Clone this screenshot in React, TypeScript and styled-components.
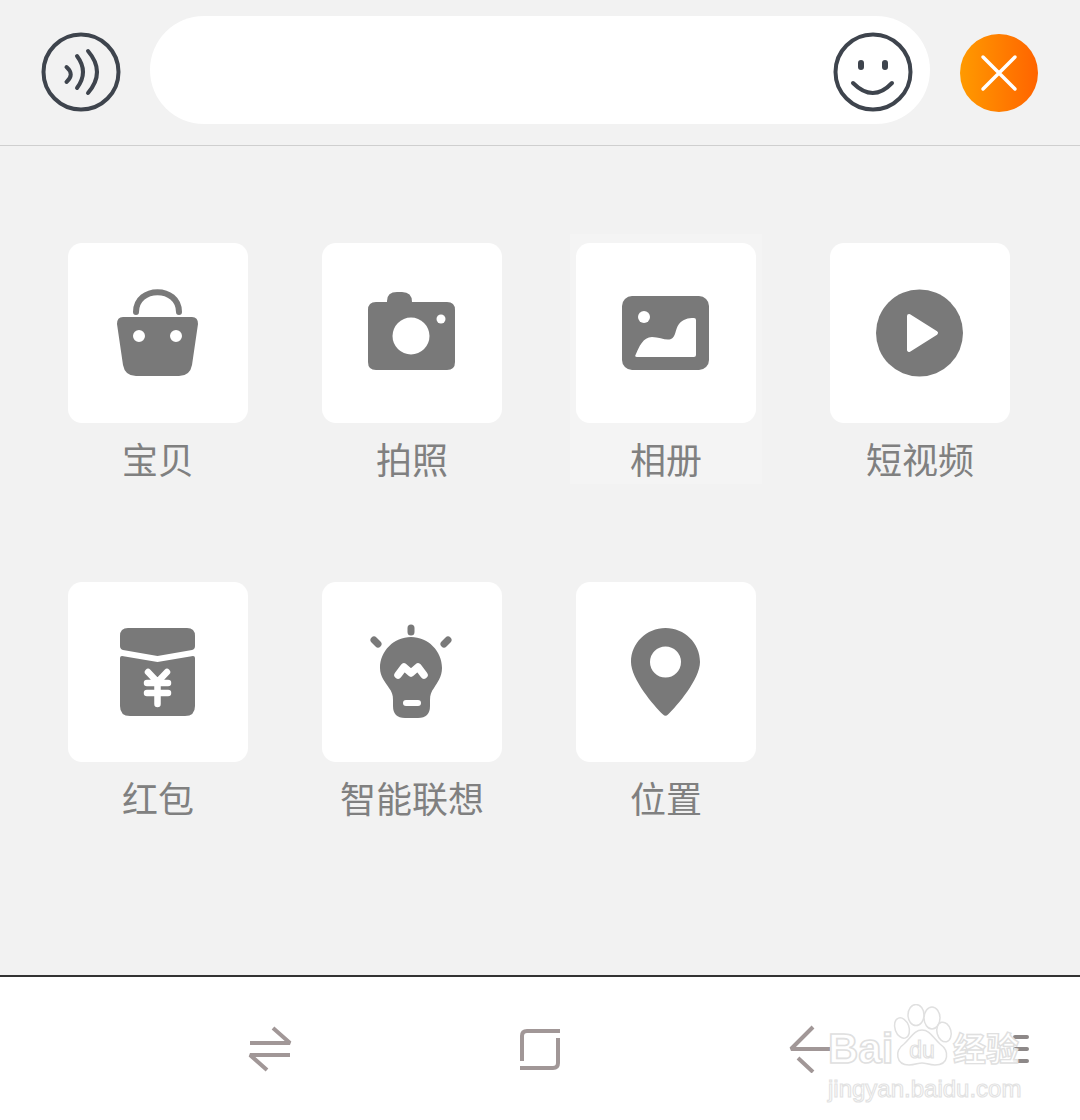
import styled, { createGlobalStyle } from 'styled-components';

const GlobalStyle = createGlobalStyle`
  html, body {
    margin: 0;
    padding: 0;
    background: #f2f2f2;
  }
  * {
    box-sizing: border-box;
  }
`;

const Page = styled.div`
  width: 1080px;
  height: 1120px;
  position: relative;
  overflow: hidden;
  display: flex;
  flex-direction: column;
  background: #f2f2f2;
  font-family: 'Noto Sans CJK SC', 'Liberation Sans', sans-serif;
`;

const InputBar = styled.header`
  height: 146px;
  flex: none;
  display: flex;
  align-items: flex-start;
  padding: 16px 0 0 41px;
  border-bottom: 1px solid #cfcfcf;
`;

const HeaderIcon = styled.svg`
  display: block;
  flex: none;
  width: 80px;
  height: 80px;
  fill: none;
  stroke: #3e444d;
  stroke-linecap: round;
`;

const VoiceButton = styled.div`
  margin: 16px 29px 0 0;
`;

const TextField = styled.div`
  width: 780px;
  height: 108px;
  flex: none;
  display: flex;
  align-items: center;
  justify-content: flex-end;
  padding: 4px 17px 0 0;
  background: #fff;
  border-radius: 54px;
`;

const CloseButton = styled.div`
  width: 78px;
  height: 78px;
  margin: 18px 0 0 30px;
  border-radius: 50%;
  background: linear-gradient(90deg, #ff9a00, #ff6400);
`;

const CloseGlyph = styled.svg`
  display: block;
  width: 78px;
  height: 78px;
  fill: none;
  stroke: #fff;
  stroke-width: 3.5;
  stroke-linecap: round;
`;

const Panel = styled.main`
  height: 829px;
  flex: none;
  display: grid;
  grid-template-columns: repeat(4, 192px);
  grid-auto-rows: 250px;
  column-gap: 62px;
  row-gap: 89px;
  align-content: start;
  padding: 88px 0 0 62px;
`;

const Cell = styled.div<{ $active?: boolean }>`
  display: flex;
  flex-direction: column;
  align-items: center;
  padding-top: 9px;
  background: ${(p) => (p.$active ? '#f4f4f4' : 'transparent')};
`;

const Tile = styled.div`
  width: 180px;
  height: 180px;
  background: #fff;
  border-radius: 14px;
`;

const TileIcon = styled.svg`
  display: block;
  width: 180px;
  height: 180px;
  fill: #797979;
`;

const Label = styled.div`
  margin-top: 16px;
  font-size: 36px;
  line-height: 38px;
  font-weight: 400;
  color: #808080;
  white-space: nowrap;
`;

const NavBar = styled.nav`
  flex: 1;
  display: flex;
  align-items: flex-start;
  padding: 48px 0 0 246px;
  background: #fff;
  border-top: 2px solid #333;
`;

const NavIcon = styled.svg<{ $gap?: number }>`
  display: block;
  flex: none;
  width: 48px;
  height: 48px;
  margin-right: ${(p) => p.$gap ?? 222}px;
  fill: none;
  stroke: #a19797;
  stroke-width: 4;
  stroke-linejoin: bevel;
`;

const MenuIcon = styled(NavIcon)`
  stroke: #8d8888;
  stroke-linecap: round;
`;

/* baidu watermark lying over the nav bar */
const Watermark = styled.div`
  position: absolute;
  left: 828px;
  top: 1003px;
  width: 200px;
  display: flex;
  flex-direction: column;
  pointer-events: none;
`;

const MarkRow = styled.div`
  display: flex;
  align-items: flex-end;
  height: 66px;
`;

const MarkWord = styled.span`
  flex: none;
  width: 65px;
  margin-bottom: -4px;
  font-family: 'Liberation Sans', sans-serif;
  font-weight: 700;
  font-size: 42px;
  line-height: 48px;
  color: rgba(255, 255, 255, 0.9);
  -webkit-text-stroke: 1.6px #e0e0e0;
`;

const MarkCjk = styled.span`
  flex: none;
  margin-bottom: 0;
  font-family: 'Noto Sans CJK SC', sans-serif;
  font-weight: 700;
  font-size: 33px;
  line-height: 44px;
  color: rgba(255, 255, 255, 0.9);
  -webkit-text-stroke: 1.4px #e0e0e0;
`;

const MarkPaw = styled.svg`
  display: block;
  flex: none;
  width: 60px;
  height: 64px;
  margin-bottom: 1px;
  fill: rgba(255, 255, 255, 0.9);
  stroke: #e0e0e0;
  stroke-width: 1.5;
`;

const MarkPawText = styled.text`
  font-family: 'Liberation Sans', sans-serif;
  font-size: 23px;
  font-weight: 400;
  stroke-width: 1.1;
`;

const MarkUrl = styled.div`
  margin-top: 6px;
  font-family: 'Liberation Sans', sans-serif;
  font-size: 24px;
  line-height: 28px;
  color: rgba(255, 255, 255, 0.9);
  -webkit-text-stroke: 1.1px #e2e2e2;
  white-space: nowrap;
`;

const BagIcon = () => (
  <TileIcon viewBox="0 0 180 180">
    <path d="M68 69C68 42.500 111 42.500 111 69" fill="none" stroke="#797979" strokeWidth="6" strokeLinecap="round" />
    <path
      fillRule="evenodd"
      d="M55 74H124Q130 74 130 81L124 122Q122 133 111 133H68Q57 133 55 122L49 81Q49 74 55 74ZM71 87a6 6 0 1 0 0 12a6 6 0 1 0 0-12ZM108 87a6 6 0 1 0 0 12a6 6 0 1 0 0-12Z"
    />
  </TileIcon>
);

const CameraIcon = () => (
  <TileIcon viewBox="0 0 180 180">
    <path d="M54 59H65V58Q65 49 75 49H80Q90 49 90 59H125Q133 59 133 67V119Q133 127 125 127H54Q46 127 46 119V67Q46 59 54 59Z" />
    <circle cx="89" cy="93" r="18.5" fill="#fff" />
    <circle cx="119" cy="76" r="4.5" fill="#fff" />
  </TileIcon>
);

const AlbumIcon = () => (
  <TileIcon viewBox="0 0 180 180">
    <rect x="46" y="53" width="87" height="74" rx="10" />
    <circle cx="68" cy="74" r="6" fill="#fff" />
    <path
      fill="#fff"
      d="M60 111C63 104 67 94 76 94C84 94 90 98 95 96C100 94 99 86 103 81C107 76 112 75 118 75Q120 75 120 77V112Q120 114 118 114H61Q58 114 60 111Z"
    />
  </TileIcon>
);

const PlayIcon = () => (
  <TileIcon viewBox="0 0 180 180">
    <circle cx="89.5" cy="90" r="43.5" />
    <path d="M79 73L106 90L79 107Z" fill="#fff" stroke="#fff" strokeWidth="4" strokeLinejoin="round" />
  </TileIcon>
);

const PacketIcon = () => (
  <TileIcon viewBox="0 0 180 180">
    <path d="M60 46H119Q127 46 127 54V64Q127 67 124 68L89.5 74L55 68Q52 67 52 64V54Q52 46 60 46Z" />
    <path d="M54 74L89.5 80L125 74Q127 74 127 76V124Q127 134 117 134H62Q52 134 52 124V76Q52 74 54 74Z" />
    <path
      d="M80 90L89.5 100L99 90M79 101H100M79 111H100M89.5 100V122"
      fill="none"
      stroke="#fff"
      strokeWidth="6.5"
      strokeLinecap="round"
      strokeLinejoin="round"
    />
  </TileIcon>
);

const BulbIcon = () => (
  <TileIcon viewBox="0 0 180 180">
    <path d="M89 55C106 55 120 69 120 86C120 95 115 101 112 106C109 110 108 113 108 118V124Q108 136 96 136H83Q71 136 71 124V118C71 113 70 110 67 106C64 101 58 95 58 86C58 69 72 55 89 55Z" />
    <path d="M89 46V50M52 58L56 62M126 58L122 62" fill="none" stroke="#797979" strokeWidth="7" strokeLinecap="round" />
    <path d="M76 93L82 85L89 91L96 85L102 93" fill="none" stroke="#fff" strokeWidth="7.5" strokeLinecap="round" strokeLinejoin="round" />
    <path d="M84 121H96" fill="none" stroke="#fff" strokeWidth="6" strokeLinecap="round" />
  </TileIcon>
);

const PinIcon = () => (
  <TileIcon viewBox="0 0 180 180">
    <path d="M89.5 46C108.5 46 124 61 124 80C124 97 101 124 92 132.5Q89.5 135 87 132.5C78 124 55 97 55 80C55 61 70.5 46 89.5 46Z" />
    <circle cx="89.5" cy="80" r="15.5" fill="#fff" />
  </TileIcon>
);

const items = [
  { label: '宝贝', icon: <BagIcon /> },
  { label: '拍照', icon: <CameraIcon /> },
  { label: '相册', icon: <AlbumIcon />, active: true },
  { label: '短视频', icon: <PlayIcon /> },
  { label: '红包', icon: <PacketIcon /> },
  { label: '智能联想', icon: <BulbIcon /> },
  { label: '位置', icon: <PinIcon /> },
];

export default function App() {
  return (
    <Page>
      <GlobalStyle />
      <InputBar>
        <VoiceButton>
          <HeaderIcon viewBox="0 0 80 80" strokeWidth="4">
            <circle cx="40" cy="40" r="37.500" />
            <path d="M25.500 35Q34 42.500 25.500 50" />
            <path d="M36 24Q48 40 36 56" />
            <path d="M47 19Q65 40 47 61" />
          </HeaderIcon>
        </VoiceButton>
        <TextField>
          <HeaderIcon viewBox="0 0 80 80" strokeWidth="4">
            <circle cx="40" cy="40" r="37.500" />
            <path d="M28 31V35M52 31V35" strokeWidth="6" />
            <path d="M20 51Q40 71 59 51" />
          </HeaderIcon>
        </TextField>
        <CloseButton>
          <CloseGlyph viewBox="0 0 78 78">
            <path d="M23 23L55 55M55 23L23 55" />
          </CloseGlyph>
        </CloseButton>
      </InputBar>

      <Panel>
        {items.map((item) => (
          <Cell key={item.label} $active={item.active}>
            <Tile>{item.icon}</Tile>
            <Label>{item.label}</Label>
          </Cell>
        ))}
      </Panel>

      <NavBar>
        <NavIcon viewBox="0 0 48 48">
          <path d="M4 18H44L27 3M44 30H4L21 45" />
        </NavIcon>
        <NavIcon viewBox="0 0 48 48">
          <path d="M6 36V11Q6 6 11 6H44M42 13V38Q42 43 37 43H4" />
        </NavIcon>
        <NavIcon viewBox="0 0 48 48" $gap={156}>
          <path d="M44 24H5L27 2M12 33L27 47" />
        </NavIcon>
        <MenuIcon viewBox="0 0 48 48">
          <path d="M25 12H37M25 24H37M25 36H37" />
        </MenuIcon>
      </NavBar>

      <Watermark>
        <MarkRow>
          <MarkWord>Bai</MarkWord>
          <MarkPaw viewBox="0 0 60 64">
            <ellipse cx="9" cy="24" rx="7" ry="10.500" transform="rotate(-20 9 24)" />
            <ellipse cx="23" cy="11" rx="8" ry="10.500" />
            <ellipse cx="39" cy="14" rx="8" ry="11" />
            <ellipse cx="51" cy="28" rx="7" ry="10" transform="rotate(-15 51 28)" />
            <path d="M29 26C37 26 40 34 47 40C57 47 56 61 42 61C36 61 33 59 29 59C25 59 22 61 16 61C3 61 1 47 11 40C18 34 21 26 29 26Z" />
            <MarkPawText x="29" y="54" textAnchor="middle">
              du
            </MarkPawText>
          </MarkPaw>
          <MarkCjk>经验</MarkCjk>
        </MarkRow>
        <MarkUrl>jingyan.baidu.com</MarkUrl>
      </Watermark>
    </Page>
  );
}
